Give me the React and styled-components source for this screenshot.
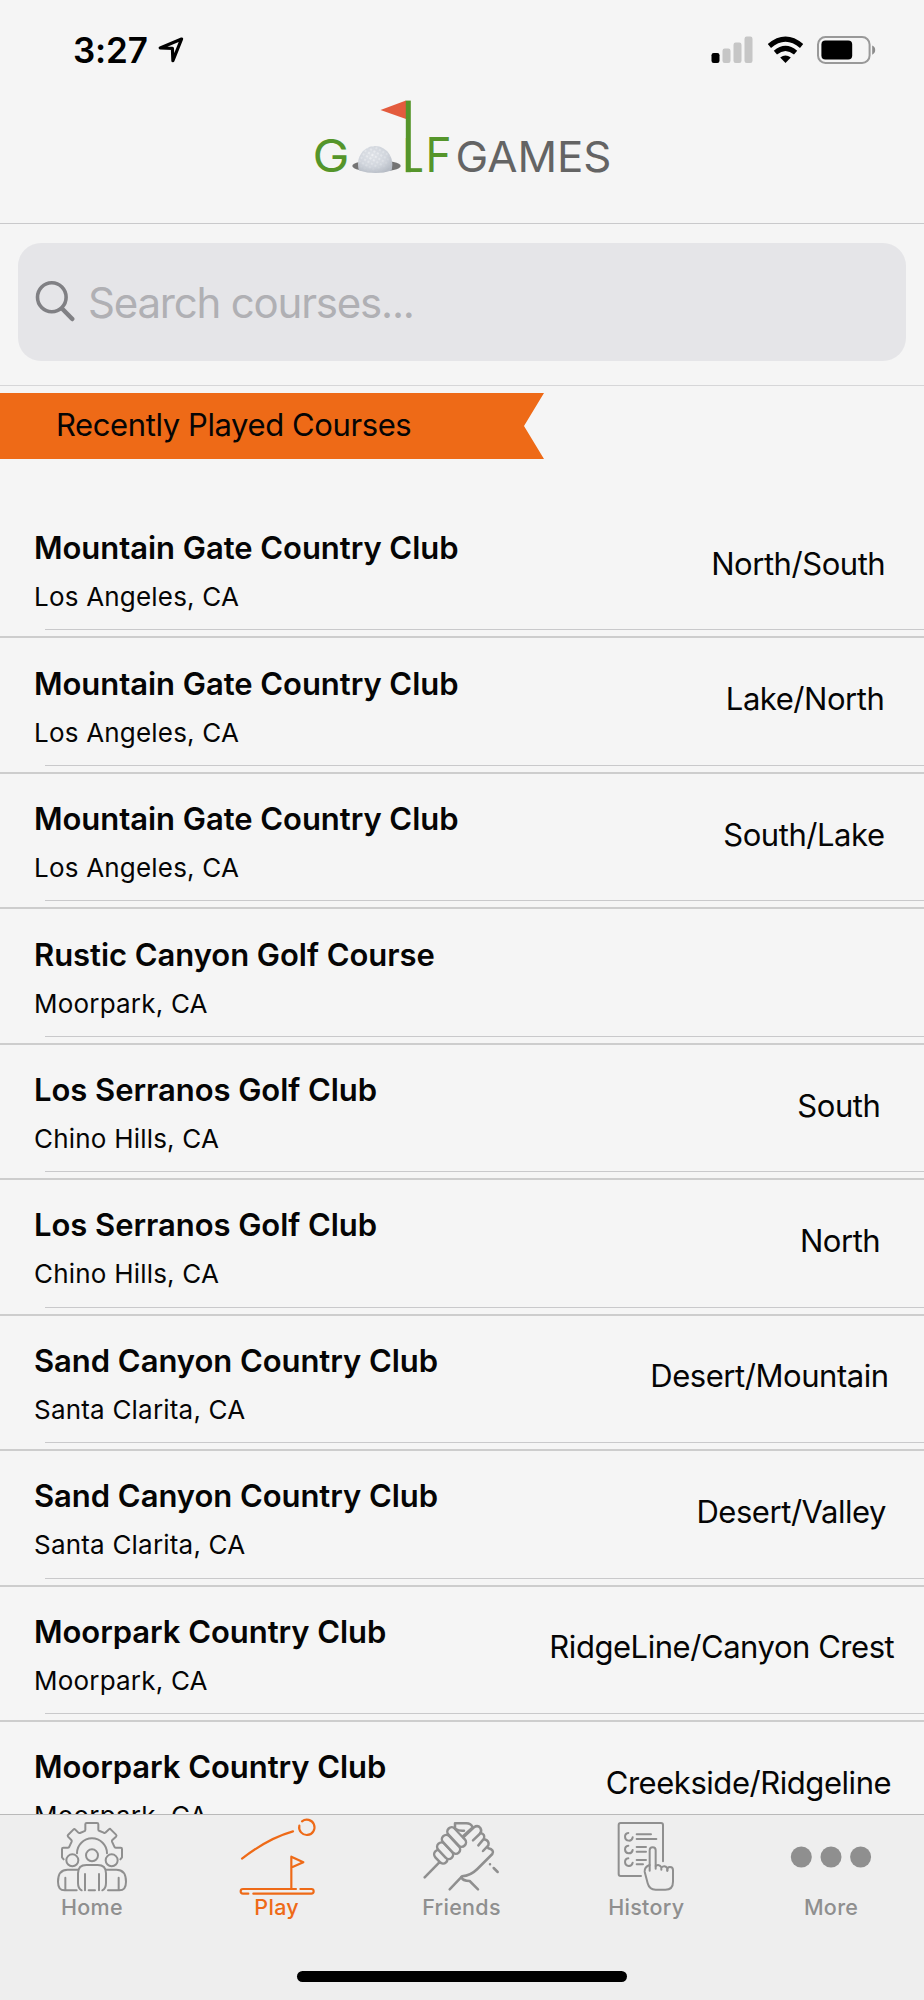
import React from 'react'
import styled, { createGlobalStyle, ThemeProvider } from 'styled-components'

const theme = {
  colors: {
    page: '#f5f5f5',
    bar: '#eeeeee',
    field: '#e5e5e8',
    line: '#c9c9cb',
    rowLine: '#cdcdcd',
    orange: '#ee6a17',
    green: '#55952a',
    muted: '#8f8f8f',
    placeholder: '#b0b0b4',
    glass: '#808084',
  },
}

const GlobalStyle = createGlobalStyle`
  *, *::before, *::after {
    box-sizing: border-box;
  }
  body {
    margin: 0;
    background: ${theme.colors.page};
    color: #050505;
    font-family: Inter, 'Liberation Sans', sans-serif;
  }
`

const Screen = styled.div`
  display: flex;
  flex-direction: column;
  width: 924px;
  height: 2000px;
  overflow: hidden;
  background: ${(props) => props.theme.colors.page};
`

const StatusBar = styled.div`
  flex: none;
  display: flex;
  align-items: center;
  justify-content: space-between;
  height: 100px;
  padding: 0 47px 0 73px;
`
const Clock = styled.div`
  display: flex;
  align-items: center;
  gap: 10px;
  font-size: 35px;
  font-weight: 600;
  letter-spacing: -0.2px;
  color: #000;
`
const Indicators = styled.div`
  display: flex;
  align-items: center;
  gap: 13.5px;
`

const Header = styled.header`
  flex: none;
  display: flex;
  justify-content: center;
  height: 124px;
  border-bottom: 1px solid ${(props) => props.theme.colors.line};
`

const SearchArea = styled.div`
  flex: none;
  height: 162px;
  padding: 19px 18px 0;
  border-bottom: 1px solid #d6d6d8;
`
const SearchField = styled.div`
  display: flex;
  align-items: center;
  gap: 11px;
  height: 118px;
  padding: 0 17px;
  border-radius: 23px;
  background: ${(props) => props.theme.colors.field};
`
const Placeholder = styled.span`
  font-size: 42px;
  letter-spacing: -1.2px;
  color: ${(props) => props.theme.colors.placeholder};
`

const Ribbon = styled.h2`
  flex: none;
  display: flex;
  align-items: center;
  width: 544px;
  height: 66px;
  margin: 7px 0 44px;
  padding: 0 0 3px 56px;
  font-size: 31px;
  font-weight: 400;
  letter-spacing: -0.4px;
  background: ${(props) => props.theme.colors.orange};
  clip-path: polygon(0 0, 100% 0, 524px 50%, 100% 100%, 0 100%);
`

const List = styled.ul`
  flex: 1;
  min-height: 0;
  margin: 0;
  padding: 0;
  overflow: hidden;
  list-style: none;
`
const Row = styled.li`
  display: flex;
  flex-direction: column;
  height: 135.46px;
  border-bottom: 2px solid ${(props) => props.theme.colors.rowLine};
`
const RowBody = styled.div`
  flex: 1;
  display: flex;
  align-items: center;
  justify-content: space-between;
  padding: 0 48px 0 34px;
`
const Separator = styled.div`
  height: 1px;
  margin: 0 0 6px 45px;
  background: ${(props) => props.theme.colors.line};
`
const Club = styled.div`
  padding-top: 13px;
`
const ClubName = styled.div`
  font-size: 31px;
  font-weight: 600;
  line-height: 48px;
  letter-spacing: -0.05px;
`
const Place = styled.div`
  font-size: 26px;
  line-height: 49px;
  letter-spacing: 0.2px;
`
// long layout names run a little further into the right margin
const Layout = styled.div`
  margin-top: -6px;
  font-size: 31px;
  letter-spacing: -0.45px;
  transform: translateX(5.3%);
`

const TabBar = styled.nav`
  flex: none;
  display: grid;
  grid-template-columns: repeat(5, 1fr);
  height: 156px;
  border-top: 1px solid #b9b9b9;
  background: ${(props) => props.theme.colors.bar};
`
const Tab = styled.div`
  display: flex;
  flex-direction: column;
  align-items: center;
  color: ${(props) =>
    props.$active ? props.theme.colors.orange : props.theme.colors.muted};
`
const TabLabel = styled.span`
  margin: -1px 1px 0 0;
  font-size: 21.5px;
  font-weight: 500;
  line-height: 27px;
  letter-spacing: 0.3px;
`
const HomeArea = styled.div`
  flex: none;
  display: flex;
  justify-content: center;
  height: 30px;
  background: ${(props) => props.theme.colors.bar};
`
const HomeIndicator = styled.div`
  width: 330px;
  height: 11px;
  margin-top: 1px;
  border-radius: 6px;
  background: #000;
`

const LocationArrow = () => (
  <svg width="26" height="26" viewBox="0 0 26 26" fill="none" stroke="#000" strokeWidth="3.2" strokeLinejoin="round">
    <path d="M23.6 2 2.2 10.900l12.200.5.5 12.200z" />
  </svg>
)

const Signal = () => (
  <svg width="42" height="28" viewBox="0 0 42 28" fill="#c6c6c6">
    <rect x="0.5" y="17" width="8" height="10" rx="2.2" fill="#000" />
    <rect x="11.5" y="12.5" width="8" height="14.5" rx="2.2" />
    <rect x="22.5" y="6.5" width="8" height="20.5" rx="2.2" />
    <rect x="33.5" y="0.5" width="8" height="26.5" rx="2.2" />
  </svg>
)

const Wifi = () => (
  <svg width="37" height="28" viewBox="0 0 37 28" fill="none" stroke="#000" strokeWidth="5">
    <path d="M2.4 10Q18.5-3.6 34.6 10" />
    <path d="M8.4 16.6Q18.5 8.2 28.6 16.6" />
    <path d="M13.2 21.6Q18.5 17.2 23.8 21.6L18.5 27z" fill="#000" stroke="none" />
  </svg>
)

const Battery = () => (
  <svg width="60" height="28" viewBox="0 0 60 28">
    <rect x="1" y="1" width="51.6" height="26" rx="7.5" fill="none" stroke="#999" strokeWidth="2" />
    <rect x="4.4" y="4.6" width="30.8" height="19" rx="4" />
    <path d="M55.2 9.5q3 1.3 3 4.6t-3 4.6z" fill="#8c8c8c" />
  </svg>
)

const Logo = () => (
  <svg width="304" height="90" viewBox="310 100 304 90" fontFamily="Inter, sans-serif">
    <defs>
      <radialGradient id="ball" cx="0.42" cy="0.35" r="0.7">
        <stop offset="0" stopColor="#eff1f4" />
        <stop offset="0.6" stopColor="#d9dde3" />
        <stop offset="1" stopColor="#b4bac3" />
      </radialGradient>
      <pattern id="dimples" width="4" height="4" patternUnits="userSpaceOnUse" patternTransform="rotate(30)">
        <circle cx="2" cy="2" r="1.3" fill="none" stroke="#bcc3cc" strokeWidth="0.5" />
      </pattern>
    </defs>
    <text x="312.6" y="172.2" fontSize="45.5" fill={theme.colors.green} textLength="37" lengthAdjust="spacingAndGlyphs">G</text>
    <ellipse cx="376.5" cy="166" rx="24.2" ry="5.6" fill="#747474" />
    <path d="M359 170.5C355 157 364 146 375 146s20 11 16.500 24.500Q376 175.500 359 170.500z" fill="url(#ball)" />
    <path d="M359 170.5C355 157 364 146 375 146s20 11 16.500 24.500Q376 175.500 359 170.500z" fill="url(#dimples)" />
    <path d="M380.5 110 406 100.500V119z" fill="#e35b3d" />
    <rect x="405.8" y="100.6" width="5" height="71.6" fill={theme.colors.green} />
    <text x="402.8" y="172.2" fontSize="47" fill={theme.colors.green} textLength="21" lengthAdjust="spacingAndGlyphs">L</text>
    <text x="425.5" y="172.2" fontSize="48.5" fill={theme.colors.green} textLength="26" lengthAdjust="spacingAndGlyphs">F</text>
    <text x="455.5" y="172.2" fontSize="42.5" fill="#646464" textLength="156" lengthAdjust="spacingAndGlyphs">GAMES</text>
  </svg>
)

const SearchIcon = () => (
  <svg width="42" height="44" viewBox="0 0 42 44" fill="none" stroke={theme.colors.glass} strokeLinecap="round">
    <ellipse cx="16.800" cy="17.300" rx="14.300" ry="14.500" strokeWidth="3.600" />
    <path d="M27 28.500 37.300 39" strokeWidth="4.500" />
  </svg>
)

const TabSvg = styled.svg`
  width: 84px;
  height: 80px;
  fill: none;
  stroke: currentColor;
  stroke-width: ${(props) => props.$stroke || 6};
  stroke-linecap: round;
  stroke-linejoin: round;
`

const HomeIcon = () => (
  <TabSvg viewBox="61 45 252 240">
    <path d="M102 178 97 172V147q0-4 4-4h14q3 0 4-3l7-15q1-3-1-5l-10-10q-2-3 0-5l16-16q3-3 6 0l9 9q2 2 5 1l12-5q4-1 4-4V73q0-4 4-4h31q4 0 4 4v16q0 3 4 4l12 5q3 2 5 0l11-10q3-3 5 0l16 16q3 3 0 6l-11 10q-2 2-1 5l7 15q1 3 4 3h15q4 0 4 4v25l-5 6" />
    <path d="M142 160a45 45 0 0 1 90 0" />
    <circle cx="187" cy="166" r="18" />
    <circle cx="128" cy="181" r="18" />
    <circle cx="246" cy="181" r="18" />
    <path d="M156 271q-11-5-11-22V220q0-25 25-25h34q25 0 25 25v29q0 17-11 22" />
    <path d="M166 222v49M208 222v49M177 271h19" />
    <path d="M145 209h-31q-29 0-29 36 0 26 20 26h36M107 233v38" />
    <path d="M229 209h31q29 0 29 36 0 26-20 26h-34M267 233v38" />
  </TabSvg>
)

const PlayIcon = () => (
  <TabSvg viewBox="616 45 252 240" $stroke={6.5}>
    <path d="M637 176Q715 115 790 94" />
    <path d="M817 64a23 23 0 1 1-8 13" />
    <path d="M785 266V170l36 17-34 15" />
    <path d="M799 267H640a7 7 0 0 0 0 14h16M671 281h174a7 7 0 0 0 0-14h-33" />
  </TabSvg>
)

const FriendsIcon = () => (
  <TabSvg viewBox="60 45 252 240" $stroke={7.5}>
    <path d="M74 232 118 187" />
    <g fill={theme.colors.bar}>
      <rect x="-13" y="-24" width="26" height="46" rx="13" transform="translate(123 171) rotate(-43)" />
      <rect x="-13" y="-30" width="26" height="58" rx="13" transform="translate(136 153) rotate(-43)" />
      <rect x="-13" y="-34" width="26" height="68" rx="13" transform="translate(153 133) rotate(-43)" />
      <rect x="-13" y="-35" width="26" height="70" rx="13" transform="translate(170 111) rotate(-43)" />
      <path d="M165 84V70h34q14 0 19 12l-28 26" />
    </g>
    <path d="M166 86q12 8 26 6" />
    <path d="m190 112 32-30q11-8 19 2 6 9-2 18l-20 19" />
    <path d="M241 99q15 3 11 17l-17 20M253 118q16 4 12 18l-16 17M265 145q19 4 12 17l-45 45q-20 20-46 22l-37 39" />
    <path d="M184 231q4 12 25 12l25 25M270 193h.1M281 204l12 12" />
  </TabSvg>
)

const HistoryIcon = () => (
  <TabSvg viewBox="614 45 252 240">
    <path d="M722 228H661q-6 0-6-6V75q0-6 6-6H782q6 0 6 6V184" />
    <path d="M684 99a11.500 11.500 0 1 0 13 13M684 137a11.500 11.500 0 1 0 13 13M684 175a11.500 11.500 0 1 0 13 13" />
    <path d="M709 103h43M709 117h59M709 141h28M709 155h28M709 180h28M709 193h19" />
    <path d="M748 212V151q0-9 9-9t9 9v55" />
    <path d="M748 195q-16 6-15 20l9 35q5 19 24 19h29q23 0 23-24V211q0-10-9-10t-8 11" />
    <path d="M766 198q10-7 17 4v7M783 203q9-9 18 1v8" />
  </TabSvg>
)

const MoreIcon = () => (
  <svg width="84" height="80" viewBox="0 0 84 80" fill="currentColor">
    <circle cx="11.300" cy="42" r="10.500" />
    <circle cx="41" cy="42" r="10.500" />
    <circle cx="70.600" cy="42" r="10.500" />
  </svg>
)

const courses = [
  { name: 'Mountain Gate Country Club', place: 'Los Angeles, CA', layout: 'North/South' },
  { name: 'Mountain Gate Country Club', place: 'Los Angeles, CA', layout: 'Lake/North' },
  { name: 'Mountain Gate Country Club', place: 'Los Angeles, CA', layout: 'South/Lake' },
  { name: 'Rustic Canyon Golf Course', place: 'Moorpark, CA' },
  { name: 'Los Serranos Golf Club', place: 'Chino Hills, CA', layout: 'South' },
  { name: 'Los Serranos Golf Club', place: 'Chino Hills, CA', layout: 'North' },
  { name: 'Sand Canyon Country Club', place: 'Santa Clarita, CA', layout: 'Desert/Mountain' },
  { name: 'Sand Canyon Country Club', place: 'Santa Clarita, CA', layout: 'Desert/Valley' },
  { name: 'Moorpark Country Club', place: 'Moorpark, CA', layout: 'RidgeLine/Canyon Crest' },
  { name: 'Moorpark Country Club', place: 'Moorpark, CA', layout: 'Creekside/Ridgeline' },
]

const tabs = [
  { label: 'Home', icon: HomeIcon },
  { label: 'Play', icon: PlayIcon, active: true },
  { label: 'Friends', icon: FriendsIcon },
  { label: 'History', icon: HistoryIcon },
  { label: 'More', icon: MoreIcon },
]

const CourseRow = ({ name, place, layout }) => (
  <Row>
    <RowBody>
      <Club>
        <ClubName>{name}</ClubName>
        <Place>{place}</Place>
      </Club>
      {layout && <Layout>{layout}</Layout>}
    </RowBody>
    <Separator />
  </Row>
)

const App = () => (
  <ThemeProvider theme={theme}>
    <GlobalStyle />
    <Screen>
      <StatusBar>
        <Clock>
          3:27
          <LocationArrow />
        </Clock>
        <Indicators>
          <Signal />
          <Wifi />
          <Battery />
        </Indicators>
      </StatusBar>
      <Header>
        <Logo />
      </Header>
      <SearchArea>
        <SearchField>
          <SearchIcon />
          <Placeholder>Search courses...</Placeholder>
        </SearchField>
      </SearchArea>
      <Ribbon>Recently Played Courses</Ribbon>
      <List>
        {courses.map((course, i) => (
          <CourseRow key={i} {...course} />
        ))}
      </List>
      <TabBar>
        {tabs.map(({ label, icon: Icon, active }) => (
          <Tab key={label} $active={active}>
            <Icon />
            <TabLabel>{label}</TabLabel>
          </Tab>
        ))}
      </TabBar>
      <HomeArea>
        <HomeIndicator />
      </HomeArea>
    </Screen>
  </ThemeProvider>
)

export default App
